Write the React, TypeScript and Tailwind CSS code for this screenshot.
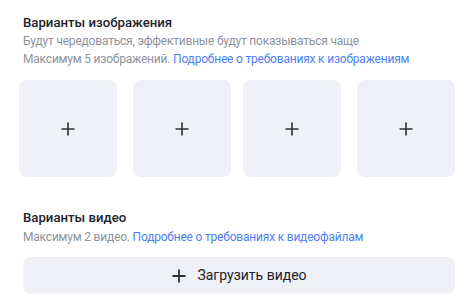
import React from "react";

const Plus = ({ size = 16, stroke = 1.6 }: { size?: number; stroke?: number }) => (
  <svg width={size} height={size} viewBox="0 0 16 16" fill="none">
    <path d="M8 1.5v13M1.5 8h13" stroke="#2b2f3a" strokeWidth={stroke} />
  </svg>
);

export default function App() {
  const font = { fontFamily: "Roboto, 'Noto Sans', sans-serif" };
  return (
    <div className="w-[472px] h-[303px] bg-white overflow-hidden" style={font}>
      <div className="pt-[14px]">
        <div className="pl-[23px] text-[13.2px] leading-[18px] font-medium text-[#21232a]">Варианты изображения</div>
        <div className="pl-[23px] text-[12px] leading-[18px] tracking-[-0.2px] text-[#8e929c]">
          Будут чередоваться, эффективные будут показываться чаще
        </div>
        <div className="pl-[23px] text-[12px] leading-[18px] tracking-[-0.2px] text-[#8e929c]">
          Максимум 5 изображений.{" "}
          <span className="text-[#4d7ff5]">Подробнее о требованиях к изображениям</span>
        </div>
        <div className="mt-3 flex pl-[19px]">
          <div className="w-[98px] h-[97px] rounded-[8px] bg-[#eef0f5] flex items-center justify-center"><Plus /></div>
          <div className="ml-[16px] w-[98px] h-[97px] rounded-[8px] bg-[#eef0f5] flex items-center justify-center"><Plus /></div>
          <div className="ml-[12px] w-[98px] h-[97px] rounded-[8px] bg-[#eef0f5] flex items-center justify-center"><Plus /></div>
          <div className="ml-[16px] w-[98px] h-[97px] rounded-[8px] bg-[#eef0f5] flex items-center justify-center"><Plus /></div>
        </div>
      </div>
      <div className="mt-[32px] pl-[23px]">
        <div className="text-[13.2px] leading-[18px] font-medium text-[#21232a]">Варианты видео</div>
        <div className="mt-[1px] text-[12px] leading-[18px] tracking-[-0.2px] text-[#8e929c]">
          Максимум 2 видео.{" "}
          <span className="text-[#4d7ff5]">Подробнее о требованиях к видеофайлам</span>
        </div>
        <div className="mt-[11px] w-[432px] h-[37px] rounded-[8px] bg-[#eef0f5] flex items-center justify-center gap-[10px]">
          <Plus size={16} stroke={1.8} />
          <span className="text-[14px] text-[#21232a]">Загрузить видео</span>
        </div>
      </div>
    </div>
  );
}
